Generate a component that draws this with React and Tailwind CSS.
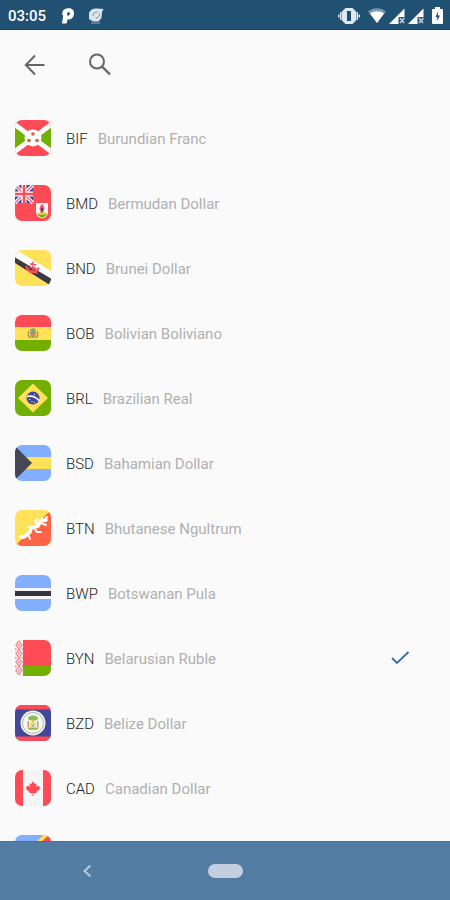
import React, { useState } from "react";

const RED = "#ff4b55";
const GREEN = "#73af00";
const YELLOW = "#ffe15a";
const BLUE = "#82afff";
const NAVY = "#41479b";
const DARK = "#464655";
const WHITE = "#f5f5f5";

function Burundi() {
  return (
    <>
      <path fill={RED} d="M0 0h36v36H0z" />
      <path fill={GREEN} d="M0 5l14 13L0 31zM36 5L22 18l14 13z" />
      <path stroke="#fff" strokeWidth="5" d="M-1 4l38 28M-1 32L37 4" />
      <circle cx="18" cy="18" r="8.500" fill="#fff" />
      <circle cx="18" cy="14" r="1.800" fill="#e8505a" />
      <circle cx="14" cy="20.500" r="1.800" fill="#e8505a" />
      <circle cx="22" cy="20.500" r="1.800" fill="#e8505a" />
      <path fill={GREEN} d="M17.500 13.500h1v1h-1zM13.500 20h1v1h-1zM21.500 20h1v1h-1z" />
    </>
  );
}

function Bermuda() {
  return (
    <>
      <path fill={RED} d="M0 0h36v36H0z" />
      <path fill={NAVY} d="M0 0h18v18H0z" />
      <path stroke="#fff" strokeWidth="3.600" d="M0 0l18 18M18 0L0 18" />
      <path stroke={RED} strokeWidth="1.200" d="M0 0l18 18M18 0L0 18" />
      <path stroke="#fff" strokeWidth="5" d="M9 0v18M0 9h18" />
      <path stroke={RED} strokeWidth="2.600" d="M9 0v18M0 9h18" />
      <path fill={WHITE} d="M21 18h12v9c0 4-3 5.500-6 6.500-3-1-6-2.500-6-6.500z" />
      <path fill={GREEN} d="M22 28.500h10c-.8 2.200-2.600 3.400-5 4.200-2.400-.8-4.200-2-5-4.200z" />
      <path fill={YELLOW} d="M24 27h6v2.500h-6z" />
      <path fill={RED} d="M26 19.500h2l1.500 4-1.500 4.500h-2l-1.500-4.500z" />
      <path fill={NAVY} d="M26 23h2v3h-2z" />
    </>
  );
}

function Brunei() {
  return (
    <>
      <path fill={YELLOW} d="M0 0h36v36H0z" />
      <path fill="#fff" d="M0 7l3-6 33 20v8z" />
      <path fill="#3a3a48" d="M0 7.500l36 21v2l-2 4L0 13z" />
      <g fill="none" stroke={RED} strokeLinecap="round">
        <path strokeWidth="2.200" d="M11.500 16.500c1 5.500 9 7.500 12 2" />
        <path strokeWidth="1.500" d="M18 12v9M15.500 14l5 .8M15 17.500l6 .5M14 21.500l8 1.500" />
      </g>
    </>
  );
}

function Bolivia() {
  return (
    <>
      <path fill={RED} d="M0 0h36v12H0z" />
      <path fill={YELLOW} d="M0 12h36v13H0z" />
      <path fill={GREEN} d="M0 25h36v11H0z" />
      <path fill="none" stroke="#8a8a50" strokeWidth="1.200" d="M14 16c-1.500 3-.5 6 2 7M22 16c1.500 3 .5 6-2 7M15 15l3-1 3 1" />
      <ellipse cx="18" cy="18.500" rx="2.800" ry="3.500" fill="#7d9a9a" />
      <path fill="#e98a3c" d="M16.500 19h3v2.500h-3zM12.500 19h1.500v2.500h-1.500zM22 19h1.500v2.500H22z" />
      <path fill={GREEN} d="M16 21.500h4l-2 1.800z" />
    </>
  );
}

function Brazil() {
  return (
    <>
      <path fill={GREEN} d="M0 0h36v36H0z" />
      <path fill={YELLOW} d="M18 3.500L33 18 18 32.500 3 18z" />
      <circle cx="18" cy="18" r="6.500" fill={NAVY} />
      <path fill="none" stroke="#fff" strokeWidth="1.700" d="M12 16.500c4-1 9 .5 12 4" />
      <path fill="#fff" d="M14 19h1v1h-1zM16.500 21h1v1h-1zM19 22h1v1h-1zM19 14h1v1h-1z" />
    </>
  );
}

function Bahamas() {
  return (
    <>
      <path fill={BLUE} d="M0 0h36v36H0z" />
      <path fill={YELLOW} d="M0 12h36v12H0z" />
      <path fill={DARK} d="M0 2l2 1 15 15L2 33l-2 1z" />
    </>
  );
}

function Bhutan() {
  return (
    <>
      <path fill={YELLOW} d="M0 0h36v36H0z" />
      <path fill="#ff6446" d="M36 0v36H0z" />
      <path
        fill="none"
        stroke="#fff"
        strokeWidth="3.600"
        strokeLinecap="round"
        strokeLinejoin="round"
        d="M7 27c4 1 4-3 7-4s0-5 4-6 5 1 6-3 3-3 7-4"
      />
      <path
        fill="none"
        stroke="#fff"
        strokeWidth="2"
        strokeLinecap="round"
        d="M13 24l2 5M16 18l-3-1M19 18l3 4h4M22 14l-2-3 3-2M26 13l5 2M29 10l3-3M27 10V8M6 26l-1 1"
      />
    </>
  );
}

function Botswana() {
  return (
    <>
      <path fill={BLUE} d="M0 0h36v36H0z" />
      <path fill={WHITE} d="M0 13h36v11H0z" />
      <path fill="#353540" d="M0 16h36v5H0z" />
    </>
  );
}

function Belarus() {
  return (
    <>
      <path fill={RED} d="M0 0h36v26H0z" />
      <path fill={GREEN} d="M0 26h36v10H0z" />
      <path fill={WHITE} d="M0 0h8v36H0z" />
      <path
        fill="none"
        stroke="#ff7d85"
        strokeWidth="1.200"
        d="M4 1l3 4-3 4-3-4zM4 9.500l3 4-3 4-3-4zM4 18l3 4-3 4-3-4zM4 26.500l3 4-3 4-3-4z"
      />
      <path
        fill="#ff7d85"
        d="M3.200 4h1.600v2H3.200zM3.200 12.500h1.600v2H3.200zM3.200 21h1.600v2H3.200zM3.200 29.500h1.600v2H3.200zM0 8.500h1.500v1.500H0zM0 17h1.500v1.500H0zM0 25.500h1.500V27H0zM6.500 8.500H8v1.500H6.500zM6.500 17H8v1.500H6.500zM6.500 25.500H8V27H6.500z"
      />
    </>
  );
}

function Belize() {
  return (
    <>
      <path fill={NAVY} d="M0 0h36v36H0z" />
      <path fill={RED} d="M0 0h36v4.500H0zM0 31.500h36V36H0z" />
      <circle cx="18" cy="18" r="12.500" fill={WHITE} />
      <circle cx="18" cy="18" r="10.500" fill="none" stroke="#a9bf95" strokeWidth="1" />
      <path fill="#8fbe50" d="M13 14c0-2 2-3.500 5-3.500s5 1.500 5 3.500l-2 1.500h-6zM12 22.500h12l-2 2.200h-8z" />
      <path fill={YELLOW} d="M15 17h6v4.500h-6z" />
      <path fill="#c79a6c" d="M12.500 16H14v6h-1.500zM22 16h1.500v6H22zM17.500 14h1v4h-1z" />
      <path fill={BLUE} d="M16 19.500h4l-2 3z" />
    </>
  );
}

function Canada() {
  return (
    <>
      <path fill={WHITE} d="M0 0h36v36H0z" />
      <path fill={RED} d="M0 0h8v36H0zM28 0h8v36h-8z" />
      <path
        fill={RED}
        d="M18 11l1.600 3 1.900-.8-.6 3.800 2-1.700.5 1.300 1.700-.2-.6 2 .7.700-3.800 3 .3 1.200-3.200-.4V26h-1v-3.100l-3.200.4.300-1.200-3.800-3 .7-.7-.6-2 1.700.2.500-1.300 2 1.700-.6-3.800 1.900.8z"
      />
    </>
  );
}

function Congo() {
  return (
    <>
      <path fill={BLUE} d="M0 0h36v36H0z" />
      <path stroke={YELLOW} strokeWidth="11" d="M-3 36L38-1" />
      <path stroke={RED} strokeWidth="7" d="M-3 38L39 0" />
    </>
  );
}

const CURRENCIES = [
  { code: "BIF", name: "Burundian Franc", Flag: Burundi },
  { code: "BMD", name: "Bermudan Dollar", Flag: Bermuda },
  { code: "BND", name: "Brunei Dollar", Flag: Brunei },
  { code: "BOB", name: "Bolivian Boliviano", Flag: Bolivia },
  { code: "BRL", name: "Brazilian Real", Flag: Brazil },
  { code: "BSD", name: "Bahamian Dollar", Flag: Bahamas },
  { code: "BTN", name: "Bhutanese Ngultrum", Flag: Bhutan },
  { code: "BWP", name: "Botswanan Pula", Flag: Botswana },
  { code: "BYN", name: "Belarusian Ruble", Flag: Belarus },
  { code: "BZD", name: "Belize Dollar", Flag: Belize },
  { code: "CAD", name: "Canadian Dollar", Flag: Canada },
];

function FlagIcon({ children }) {
  return (
    <svg viewBox="0 0 36 36" fill="none" aria-hidden="true" className="w-9 h-9 rounded-[7px] shrink-0">
      {children}
    </svg>
  );
}

function SignalIcon() {
  return (
    <svg viewBox="0 0 16 16" className="w-4 h-4">
      <path fill="#fff" d="M0 16L15.500.5V9h-6v7z" />
      <path stroke="#b4c6d3" strokeWidth="1.800" d="M11 10l4 5M15.500 10l-4.500 5" />
    </svg>
  );
}

function StatusBar() {
  return (
    <div className="flex shrink-0 items-center h-[30px] pt-0.5 pl-2 pr-[7px] bg-[#205072] border-b border-[#123f68] text-white">
      <span className="text-[15px] font-medium leading-5">03:05</span>
      <svg viewBox="0 0 12 16" className="w-3 h-4 ml-4">
        <path
          fill="#fff"
          fillRule="evenodd"
          d="M1 2.500C3 .3 6 0 8 .3c3 .7 4.500 3 4 6.200-.5 3.300-3 5.300-6.500 5L4.500 15.500H0L1.200 7.500 0 6.500zM5.500 4.300L5 7.500c2 .3 2.800-.6 3-1.800.1-1.200-1-1.800-2.500-1.400z"
        />
      </svg>
      <svg viewBox="0 0 16 16" className="w-4 h-4 ml-3.5">
        <path fill="#dbe4eb" d="M1 5c1-3 4-5 8-4.500L15.500 1 14 4l-.5 6-3 3.500H5L1 11z" />
        <path fill="none" stroke="#6f93ab" strokeWidth="1" d="M5 8c0-3 2-4 4.500-4M8 10c2.500 0 3.500-2 3.500-4.500" />
        <path stroke="#8fabbd" strokeWidth="1" d="M3 15h9" />
      </svg>
      <div className="flex items-center ml-auto">
        <svg viewBox="0 0 22 16" className="w-[22px] h-4">
          <path
            fill="#dfe8ee"
            fillRule="evenodd"
            d="M7.500 0h7L18 3.500v9L14.500 16h-7L4 12.500v-9zM9 3v10h4V3z"
          />
          <path stroke="#dfe8ee" strokeWidth="1.500" d="M2.800 4v8M.8 6.500v3M19.200 4v8M21.200 6.500v3" />
        </svg>
        <svg viewBox="0 0 18 15" className="w-[18px] h-[15px] ml-2">
          <path fill="#7898ae" d="M0 3.500C5-1 13-1 18 3.500L9 15z" />
          <path fill="#fff" d="M2 5.500c4-3 10-3 14 0L9 15z" />
        </svg>
        <div className="flex items-center gap-[3px] ml-[3px]">
          <SignalIcon />
          <SignalIcon />
        </div>
        <svg viewBox="0 0 11 17" className="w-[11px] h-[17px] ml-2">
          <path fill="#fff" d="M3 0h5v2h2q1 0 1 1v13q0 1-1 1H1q-1 0-1-1V3q0-1 1-1h2z" />
          <path fill="#205072" d="M6 4.500L3.500 10h1.700v4L8 8.500H6z" />
        </svg>
      </div>
    </div>
  );
}

function CurrencyRow({ code, name, Flag, selected, onSelect }) {
  return (
    <li>
      <button
        type="button"
        aria-pressed={selected}
        onClick={onSelect}
        className="flex items-center w-full h-[65px] pl-[15px] pr-10 text-left text-[15px] leading-5"
      >
        <FlagIcon>
          <Flag />
        </FlagIcon>
        <span className="ml-[15px] mt-0.5 font-light text-[#1c1c1c]">{code}</span>
        <span className="ml-2.5 mt-0.5 text-[#b0b0b0]">{name}</span>
        {selected && (
          <svg viewBox="0 0 20 14" fill="none" className="w-5 h-3.5 ml-auto">
            <path stroke="#34709f" strokeWidth="1.800" d="M2 7l5 5L18.500 1" />
          </svg>
        )}
      </button>
    </li>
  );
}

export default function App() {
  const [selected, setSelected] = useState("BYN");

  return (
    <div className="flex flex-col h-screen bg-[#fafafa] font-[Roboto,sans-serif]">
      <StatusBar />

      <header className="flex shrink-0 items-center h-[70px] pl-6 gap-[42px]">
        <button type="button" aria-label="Back">
          <svg viewBox="0 0 22 22" fill="none" className="w-[22px] h-[22px]">
            <path stroke="#666" strokeWidth="2" d="M20.500 11H2.500M11 1.500L1.800 11l9.200 9.500" />
          </svg>
        </button>
        <button type="button" aria-label="Search">
          <svg viewBox="0 0 24 24" fill="none" className="w-6 h-6">
            <circle cx="9" cy="8.500" r="7" stroke="#666" strokeWidth="2" />
            <path stroke="#666" strokeWidth="2.400" d="M14 13.500l8 8" />
          </svg>
        </button>
      </header>

      <ul className="flex-1 min-h-0 pt-[5px] overflow-hidden">
        {CURRENCIES.map((c) => (
          <CurrencyRow
            key={c.code}
            {...c}
            selected={c.code === selected}
            onSelect={() => setSelected(c.code)}
          />
        ))}
        {/* top edge of the next flag hints that the list goes on */}
        <li aria-hidden="true" className="pl-[15px] pt-[15px]">
          <FlagIcon>
            <Congo />
          </FlagIcon>
        </li>
      </ul>

      <nav className="grid grid-cols-[1fr_35px_1fr] shrink-0 items-center h-[59px] bg-[#527ca2] border-t border-[#42729a]">
        <button type="button" aria-label="System back" className="ml-[82px] justify-self-start">
          <svg viewBox="0 0 10 14" fill="none" className="w-2.5 h-3.5">
            <path stroke="#b9cadb" strokeWidth="2" d="M8.500 1.500L2.500 7l6 5.500" />
          </svg>
        </button>
        <button type="button" aria-label="Home" className="h-3.5 rounded-full bg-[#c3cfde]" />
      </nav>
    </div>
  );
}
